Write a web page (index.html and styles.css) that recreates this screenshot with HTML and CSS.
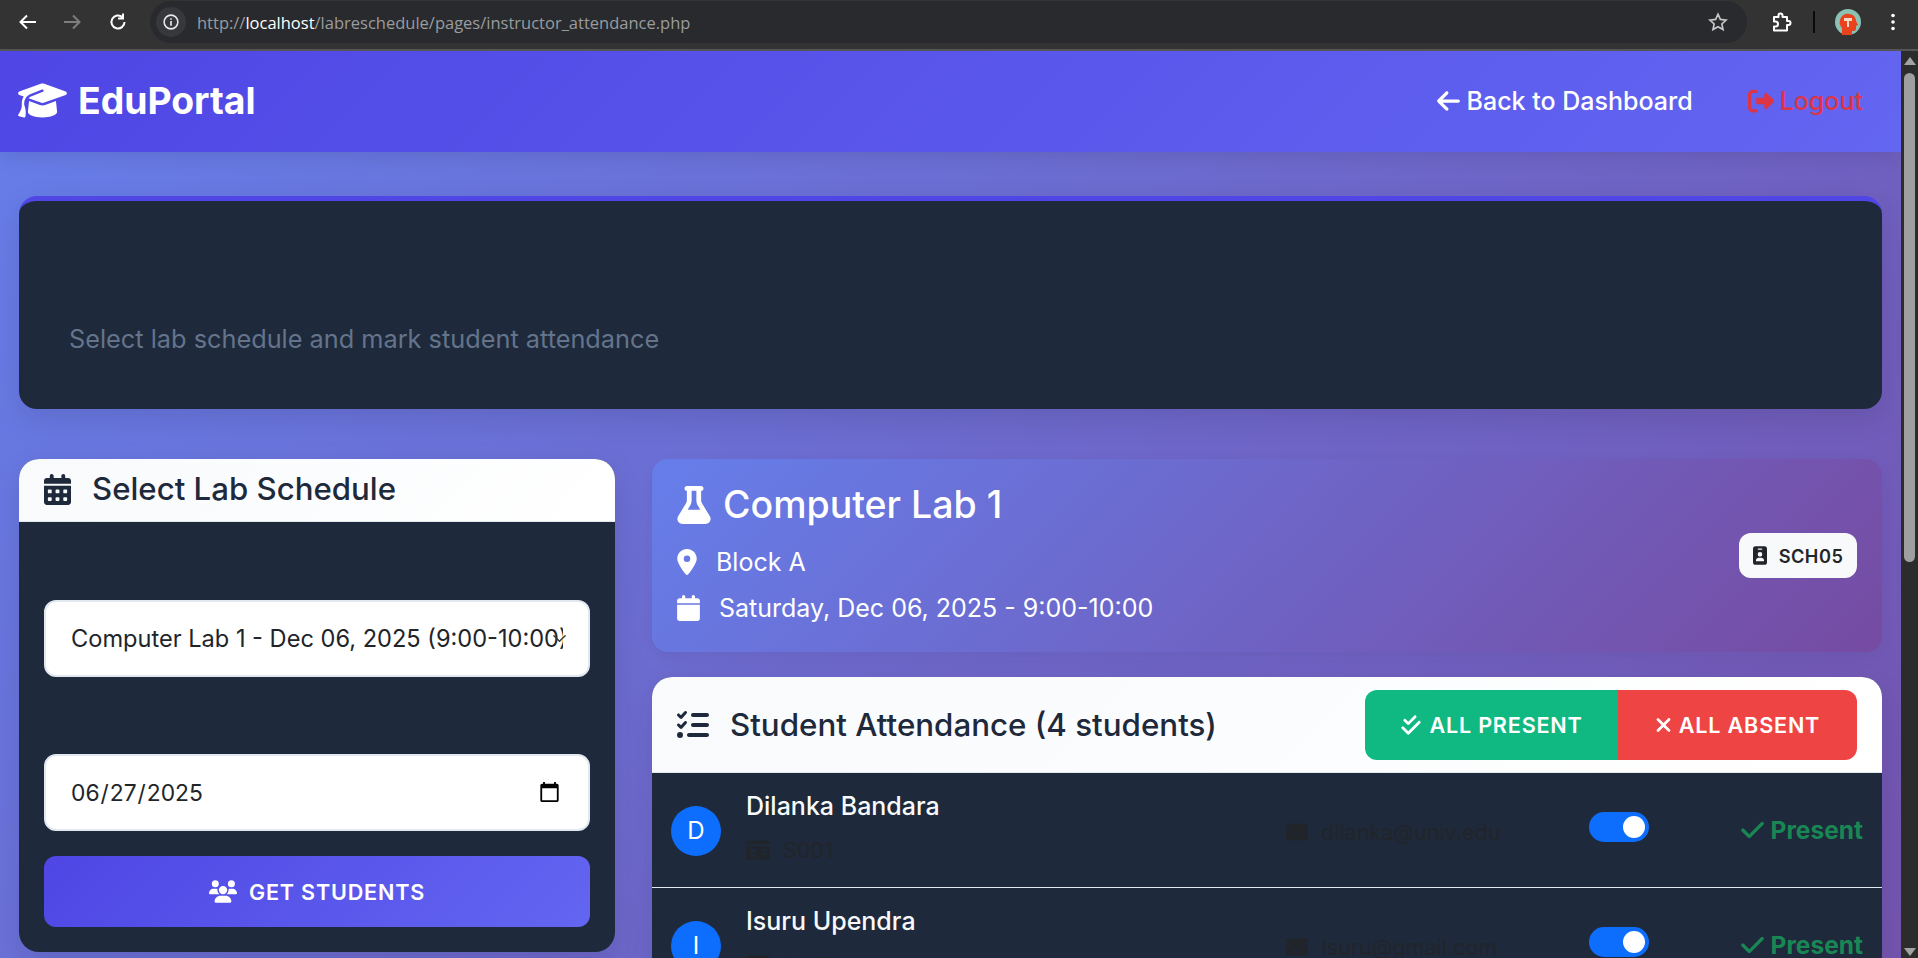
FILE: index.html
```html
<!DOCTYPE html>
<html lang="en">
<head>
<meta charset="UTF-8" />
<title>Instructor Attendance</title>
<link rel="stylesheet" href="styles.css">
</head>
<body>

<svg class="sprite" xmlns="http://www.w3.org/2000/svg">
  <symbol id="i-cap" viewBox="0 0 640 512"><path d="M320 32c-8.100 0-16.100 1.400-23.700 4.100L15.800 137.400C6.300 140.900 0 149.900 0 160s6.300 19.100 15.800 22.600l57.900 20.900C57.300 229.300 48 259.800 48 291.900v28.100c0 28.400-10.800 57.700-22.300 80.800c-6.500 13-13.900 25.800-22.500 37.600C0 442.700-.9 448.300 .9 453.400s6 8.900 11.200 10.200l64 16c4.200 1.100 8.700 .3 12.400-2s6.300-6.100 7.100-10.400c8.600-42.800 4.300-81.200-2.100-108.700C90.300 344.300 86 329.800 80 316.500V291.900c0-30.200 10.200-58.700 27.900-81.500c12.900-15.500 29.600-28 49.200-35.700l157-61.700c8.200-3.200 17.500 .8 20.700 9s-.8 17.500-9 20.700l-157 61.700c-12.400 4.900-23.300 12.400-32.200 21.600l159.600 57.600c7.600 2.700 15.600 4.100 23.700 4.100s16.100-1.400 23.700-4.100L624.200 182.600c9.500-3.400 15.800-12.500 15.800-22.600s-6.300-19.100-15.800-22.600L343.700 36.100C336.100 33.400 328.100 32 320 32zM128 408c0 35.300 86 72 192 72s192-36.700 192-72L496.700 262.600 354.500 314c-11.100 4-22.800 6-34.500 6s-23.500-2-34.500-6L143.300 262.600 128 408z"/></symbol>
  <symbol id="i-left" viewBox="0 0 448 512"><path d="M9.400 233.400c-12.500 12.500-12.500 32.800 0 45.300l160 160c12.500 12.500 32.800 12.500 45.300 0s12.500-32.800 0-45.300L109.200 288 416 288c17.700 0 32-14.300 32-32s-14.300-32-32-32l-306.700 0L214.600 118.600c12.500-12.500 12.500-32.800 0-45.300s-32.800-12.500-45.300 0l-160 160z"/></symbol>
  <symbol id="i-logout" viewBox="0 0 512 512"><path d="M377.900 105.900L500.700 228.700c7.200 7.200 11.300 17.100 11.300 27.300s-4.100 20.100-11.300 27.300L377.900 406.100c-6.400 6.400-15 9.900-24 9.900c-18.700 0-33.900-15.200-33.900-33.900l0-62.100-128 0c-17.700 0-32-14.300-32-32l0-64c0-17.700 14.300-32 32-32l128 0 0-62.100c0-18.700 15.200-33.900 33.900-33.900c9 0 17.600 3.600 24 9.900zM160 96L96 96c-17.700 0-32 14.300-32 32l0 256c0 17.700 14.300 32 32 32l64 0c17.700 0 32 14.300 32 32s-14.300 32-32 32l-64 0c-53 0-96-43-96-96L0 128C0 75 43 32 96 32l64 0c17.700 0 32 14.300 32 32s-14.300 32-32 32z"/></symbol>
  <symbol id="i-cal-alt" viewBox="0 0 448 512"><path d="M128 0c17.700 0 32 14.300 32 32V64H288V32c0-17.700 14.300-32 32-32s32 14.300 32 32V64h48c26.500 0 48 21.500 48 48v48H0V112C0 85.500 21.500 64 48 64H96V32c0-17.700 14.300-32 32-32zM0 192H448V464c0 26.500-21.500 48-48 48H48c-26.500 0-48-21.500-48-48V192zm64 80v32c0 8.800 7.200 16 16 16h32c8.800 0 16-7.200 16-16V272c0-8.800-7.200-16-16-16H80c-8.800 0-16 7.200-16 16zm128 0v32c0 8.800 7.200 16 16 16h32c8.800 0 16-7.200 16-16V272c0-8.800-7.200-16-16-16H208c-8.800 0-16 7.200-16 16zm144-16c-8.800 0-16 7.200-16 16v32c0 8.800 7.200 16 16 16h32c8.800 0 16-7.200 16-16V272c0-8.800-7.200-16-16-16H336zM64 400v32c0 8.800 7.200 16 16 16h32c8.800 0 16-7.200 16-16V400c0-8.800-7.200-16-16-16H80c-8.800 0-16 7.200-16 16zm144-16c-8.800 0-16 7.200-16 16v32c0 8.800 7.200 16 16 16h32c8.800 0 16-7.200 16-16V400c0-8.800-7.200-16-16-16H208zm112 16v32c0 8.800 7.200 16 16 16h32c8.800 0 16-7.200 16-16V400c0-8.800-7.200-16-16-16H336c-8.800 0-16 7.200-16 16z"/></symbol>
  <symbol id="i-cal" viewBox="0 0 448 512"><path d="M96 32V64H48C21.500 64 0 85.500 0 112v48H448V112c0-26.500-21.500-48-48-48H352V32c0-17.700-14.300-32-32-32s-32 14.300-32 32V64H160V32c0-17.700-14.300-32-32-32S96 14.300 96 32zM448 192H0V464c0 26.500 21.500 48 48 48H400c26.500 0 48-21.500 48-48V192z"/></symbol>
  <symbol id="i-marker" viewBox="0 0 384 512"><path d="M215.700 499.200C267 435 384 279.400 384 192C384 86 298 0 192 0S0 86 0 192c0 87.400 117 243 168.300 307.200c12.300 15.300 35.100 15.300 47.400 0zM192 128a64 64 0 1 1 0 128 64 64 0 1 1 0-128z"/></symbol>
  <symbol id="i-flask" viewBox="0 0 448 512"><path d="M288 0H160 128C110.300 0 96 14.300 96 32s14.300 32 32 32V196.800c0 11.800-3.300 23.500-9.500 33.500L10.300 406.200C3.600 417.200 0 429.700 0 442.600C0 480.900 31.100 512 69.400 512H378.600c38.300 0 69.400-31.100 69.400-69.400c0-12.800-3.600-25.400-10.300-36.400L329.500 230.400c-6.200-10.100-9.500-21.700-9.500-33.500V64c17.700 0 32-14.300 32-32s-14.300-32-32-32H288zM192 196.800V64h64V196.800c0 23.700 6.600 46.900 19 67.100L309.500 320h-171L173 263.900c12.400-20.200 19-43.400 19-67.100z"/></symbol>
  <symbol id="i-list" viewBox="0 0 512 512"><path d="M152.100 38.200c9.900 8.900 10.700 24 1.800 33.900l-72 80c-4.400 4.900-10.600 7.800-17.200 7.900s-12.900-2.400-17.600-7L7 113C-2.300 103.600-2.300 88.400 7 79s24.600-9.400 33.900 0l22.100 22.100 55.100-61.200c8.900-9.900 24-10.700 33.900-1.800zm0 160c9.900 8.900 10.700 24 1.800 33.900l-72 80c-4.400 4.900-10.600 7.800-17.200 7.900s-12.900-2.400-17.600-7L7 273c-9.400-9.400-9.400-24.600 0-33.900s24.600-9.400 33.900 0l22.100 22.100 55.100-61.200c8.900-9.900 24-10.700 33.900-1.800zM224 96c0-17.700 14.300-32 32-32H480c17.700 0 32 14.300 32 32s-14.300 32-32 32H256c-17.700 0-32-14.300-32-32zm0 160c0-17.700 14.300-32 32-32H480c17.700 0 32 14.300 32 32s-14.300 32-32 32H256c-17.700 0-32-14.300-32-32zM160 416c0-17.700 14.300-32 32-32H480c17.700 0 32 14.300 32 32s-14.300 32-32 32H192c-17.700 0-32-14.300-32-32zM48 368a48 48 0 1 1 0 96 48 48 0 1 1 0-96z"/></symbol>
  <symbol id="i-double" viewBox="0 0 512 512"><path d="M374.600 86.600c12.500-12.500 12.500-32.800 0-45.300s-32.800-12.500-45.300 0L192 178.700l-57.400-57.400c-12.500-12.500-32.800-12.500-45.300 0s-12.500 32.800 0 45.300l80 80c12.500 12.500 32.800 12.500 45.300 0l160-160zm96 128c12.500-12.500 12.500-32.800 0-45.300s-32.800-12.500-45.300 0L192 402.700 86.600 297.400c-12.500-12.500-32.800-12.500-45.300 0s-12.500 32.800 0 45.300l128 128c12.500 12.500 32.800 12.500 45.300 0l256-256z"/></symbol>
  <symbol id="i-times" viewBox="0 0 384 512"><path d="M342.600 150.600c12.500-12.500 12.500-32.800 0-45.300s-32.800-12.500-45.300 0L192 210.700 86.600 105.400c-12.500-12.500-32.800-12.500-45.300 0s-12.500 32.800 0 45.300L146.700 256 41.400 361.400c-12.500 12.500-12.500 32.800 0 45.300s32.800 12.500 45.300 0L192 301.300 297.400 406.600c12.500 12.500 32.800 12.500 45.300 0s12.500-32.800 0-45.300L237.300 256 342.600 150.600z"/></symbol>
  <symbol id="i-badge" viewBox="0 0 384 512"><path d="M64 0C28.700 0 0 28.700 0 64V448c0 35.300 28.700 64 64 64H320c35.300 0 64-28.700 64-64V64c0-35.300-28.700-64-64-64H64zm96 320h64c44.200 0 80 35.800 80 80c0 8.800-7.200 16-16 16H96c-8.800 0-16-7.200-16-16c0-44.200 35.800-80 80-80zm-32-96a64 64 0 1 1 128 0 64 64 0 1 1 -128 0zM144 64h96c8.800 0 16 7.200 16 16s-7.200 16-16 16H144c-8.800 0-16-7.200-16-16s7.200-16 16-16z"/></symbol>
  <symbol id="i-card" viewBox="0 0 576 512"><path d="M64 32C28.700 32 0 60.700 0 96v16H576V96c0-35.300-28.700-64-64-64H64zM576 160H0V416c0 35.300 28.700 64 64 64H512c35.300 0 64-28.700 64-64V160zM64 405.300c0-29.500 23.900-53.300 53.300-53.300h85.300c29.500 0 53.300 23.900 53.300 53.300c0 5.900-4.800 10.700-10.700 10.700H74.700c-5.900 0-10.700-4.800-10.700-10.700zM176 192a64 64 0 1 1 0 128 64 64 0 1 1 0-128zm176 16c0-8.800 7.200-16 16-16H496c8.800 0 16 7.200 16 16s-7.200 16-16 16H368c-8.800 0-16-7.200-16-16zm0 64c0-8.800 7.200-16 16-16H496c8.800 0 16 7.200 16 16s-7.200 16-16 16H368c-8.800 0-16-7.200-16-16zm0 64c0-8.800 7.200-16 16-16H496c8.800 0 16 7.200 16 16s-7.200 16-16 16H368c-8.800 0-16-7.200-16-16z"/></symbol>
  <symbol id="i-mail" viewBox="0 0 512 512"><path d="M48 64C21.500 64 0 85.500 0 112c0 15.100 7.100 29.300 19.200 38.400L236.800 313.600c11.400 8.500 27 8.500 38.400 0L492.800 150.400c12.100-9.100 19.200-23.300 19.200-38.400c0-26.500-21.500-48-48-48H48zM0 176V384c0 35.300 28.700 64 64 64H448c35.300 0 64-28.700 64-64V176L294.400 339.200c-22.800 17.100-54 17.100-76.800 0L0 176z"/></symbol>
  <symbol id="i-check" viewBox="0 0 448 512"><path d="M438.600 105.400c12.500 12.500 12.500 32.800 0 45.300l-256 256c-12.500 12.500-32.800 12.500-45.300 0l-128-128c-12.500-12.500-12.500-32.800 0-45.300s32.800-12.500 45.300 0L160 338.700 393.400 105.400c12.500-12.500 32.800-12.500 45.300 0z"/></symbol>
  <symbol id="i-users" viewBox="0 0 640 512"><path d="M144 0a80 80 0 1 1 0 160A80 80 0 1 1 144 0zM512 0a80 80 0 1 1 0 160A80 80 0 1 1 512 0zM0 298.700C0 239.800 47.800 192 106.700 192h42.700c15.900 0 31 3.500 44.600 9.700c-1.300 7.200-1.900 14.700-1.900 22.300c0 38.200 16.800 72.500 43.300 96c-.2 0-.4 0-.7 0H21.300C9.600 320 0 310.400 0 298.700zM405.300 320c-.2 0-.4 0-.7 0c26.600-23.500 43.300-57.800 43.300-96c0-7.600-.7-15-1.900-22.300c13.600-6.300 28.700-9.700 44.600-9.700h42.700C592.200 192 640 239.800 640 298.700c0 11.800-9.600 21.300-21.300 21.300H405.300zM224 224a96 96 0 1 1 192 0 96 96 0 1 1 -192 0zM128 485.300C128 411.700 187.700 352 261.300 352H378.700C452.300 352 512 411.700 512 485.300c0 14.700-11.900 26.700-26.700 26.700H154.700c-14.700 0-26.700-11.900-26.700-26.700z"/></symbol>
</svg>

<div class="chrome">
  <svg class="tool" viewBox="0 0 24 24"><path d="M20 12H5M11 5.500l-6.500 6.500 6.500 6.500" fill="none" stroke="#fff" stroke-width="2"/></svg>
  <svg class="tool" viewBox="0 0 24 24"><path d="M4 12h15M13 5.500l6.500 6.500-6.500 6.500" fill="none" stroke="#7d7d7d" stroke-width="2"/></svg>
  <svg class="tool reload" viewBox="0 0 24 24"><path d="M18.500 12a6.500 6.500 0 1 1-2-4.700M17 3.500v5h-5" fill="none" stroke="#fff" stroke-width="2"/></svg>
  <div class="omnibox">
    <span class="site-info">
      <svg viewBox="0 0 24 24"><circle cx="12" cy="12" r="7.500" fill="none" stroke="#e8e8e8" stroke-width="1.700"/><path d="M12 11v5M12 8v1.600" stroke="#e8e8e8" stroke-width="1.800"/></svg>
    </span>
    <span class="url">http://<b>localhost</b>/labreschedule/pages/instructor_attendance.php</span>
    <svg class="star" viewBox="0 0 24 24"><path d="M12 3.500l2.600 5.700 6.200.7-4.600 4.200 1.300 6.100-5.500-3.100-5.500 3.100 1.300-6.100-4.600-4.200 6.200-.7z" fill="none" stroke="#c4c7c5" stroke-width="1.800"/></svg>
  </div>
  <svg class="tool ext" viewBox="0 0 24 24"><path d="M5 7h4.500V5.500a2 2 0 0 1 4 0V7H18v4h1.500a2 2 0 0 1 0 4H18v5.500H5v-4h1.500a2.500 2.500 0 0 0 0-5H5z" fill="none" stroke="#fff" stroke-width="2" stroke-linejoin="round"/></svg>
  <span class="divider"></span>
  <svg class="avatar-pic" viewBox="0 0 26 26"><circle cx="13" cy="13" r="13" fill="#8cc2b5"/><path d="M7 26v-7c-2-2-3-5-2-8 1-4 5-7 9-6 4 0 7 3 7 7l2 4-2 1v3c0 2-2 2-4 2v4z" fill="#e8431c"/><path d="M9 9h8v3h-3v6h-2v-6H9z" fill="#f6d9c8"/></svg>
  <svg class="tool dots" viewBox="0 0 24 24"><circle cx="12" cy="5.500" r="1.800" fill="#fff"/><circle cx="12" cy="12" r="1.800" fill="#fff"/><circle cx="12" cy="18.500" r="1.800" fill="#fff"/></svg>
</div>

<div class="window">
  <div class="page">
    <nav class="navbar">
      <a class="brand"><svg class="ico cap"><use href="#i-cap"/></svg>EduPortal</a>
      <div class="nav-links">
        <a class="nav-link"><svg class="ico"><use href="#i-left"/></svg>Back to Dashboard</a>
        <a class="nav-link logout"><svg class="ico"><use href="#i-logout"/></svg>Logout</a>
      </div>
    </nav>

    <div class="content">
      <header class="hero">
        <p>Select lab schedule and mark student attendance</p>
      </header>

      <div class="columns">
        <section class="card picker">
          <h2 class="picker-head"><svg class="ico"><use href="#i-cal-alt"/></svg>Select Lab Schedule</h2>
          <form class="picker-body">
            <div class="select-wrap">
              <select class="field">
                <option>Computer Lab 1 - Dec 06, 2025 (9:00-10:00)</option>
              </select>
              <svg class="chevron" viewBox="0 0 16 16"><path d="M2 5l6 6 6-6" fill="none" stroke="#343a40" stroke-width="1.600" stroke-linecap="round" stroke-linejoin="round"/></svg>
            </div>
            <input class="field date" type="date" value="2025-06-27" />
            <button type="button" class="get-btn"><svg class="ico"><use href="#i-users"/></svg>Get Students</button>
          </form>
        </section>

        <div class="details">
          <section class="lab-info">
            <div class="lab-text">
              <h1><svg class="ico"><use href="#i-flask"/></svg>Computer Lab 1</h1>
              <p class="lab-place"><svg class="ico"><use href="#i-marker"/></svg>Block A</p>
              <p class="lab-date"><svg class="ico"><use href="#i-cal"/></svg>Saturday, Dec 06, 2025 - 9:00-10:00</p>
            </div>
            <span class="sch-badge"><svg class="ico"><use href="#i-badge"/></svg>SCH05</span>
          </section>

          <section class="card attendance">
            <div class="att-head">
              <h2><svg class="ico"><use href="#i-list"/></svg>Student Attendance (4 students)</h2>
              <div class="bulk">
                <button type="button" class="bulk-btn present"><svg class="ico"><use href="#i-double"/></svg>All Present</button>
                <button type="button" class="bulk-btn absent"><svg class="ico"><use href="#i-times"/></svg>All Absent</button>
              </div>
            </div>

            <div class="student">
              <span class="initial">D</span>
              <div class="who">
                <div class="name">Dilanka Bandara</div>
                <div class="sid"><svg class="ico"><use href="#i-card"/></svg>S001</div>
              </div>
              <div class="mail"><svg class="ico"><use href="#i-mail"/></svg>dilanka@univ.edu</div>
              <span class="switch"><span class="knob"></span></span>
              <div class="status"><svg class="ico"><use href="#i-check"/></svg>Present</div>
            </div>

            <div class="student">
              <span class="initial">I</span>
              <div class="who">
                <div class="name">Isuru Upendra</div>
                <div class="sid"><svg class="ico"><use href="#i-card"/></svg>S002</div>
              </div>
              <div class="mail"><svg class="ico"><use href="#i-mail"/></svg>Isuru@gmail.com</div>
              <span class="switch"><span class="knob"></span></span>
              <div class="status"><svg class="ico"><use href="#i-check"/></svg>Present</div>
            </div>
          </section>
        </div>
      </div>
    </div>
  </div>

  <div class="scrollbar">
    <span class="arrow up"></span>
    <span class="thumb"></span>
    <span class="track"></span>
    <span class="arrow down"></span>
  </div>
</div>

</body>
</html>
```

FILE: styles.css
```css
* {
  box-sizing: border-box;
}

html, body {
  margin: 0;
  height: 958px;
  overflow: hidden;
}

body {
  font-family: Inter, "Liberation Sans", sans-serif;
  background: #1e293b;
  color: #212529;
}

.sprite {
  display: none;
}

.ico {
  fill: currentColor;
  flex: none;
}

/* browser toolbar */
.chrome {
  height: 51px;
  background: #333;
  border-bottom: 2px solid #555;
  display: flex;
  align-items: center;
  padding: 0 0 5px 16px;
}

.tool {
  width: 24px;
  height: 24px;
  flex: none;
  margin-right: 20px;
}

.tool.reload {
  margin-left: 2px;
}

.omnibox {
  flex: 1;
  height: 42px;
  background: #282a2e;
  border-radius: 21px;
  display: flex;
  align-items: center;
  padding: 0 18px 0 6px;
}

.site-info {
  width: 30px;
  height: 30px;
  border-radius: 50%;
  background: #36383b;
  display: flex;
  align-items: center;
  justify-content: center;
  margin-right: 11px;
}

.site-info svg {
  width: 22px;
  height: 22px;
}

.url {
  flex: 1;
  font-family: "Open Sans", sans-serif;
  font-size: 16.5px;
  color: #9a9c9e;
  white-space: nowrap;
}

.url b {
  font-weight: 400;
  color: #fff;
}

.star {
  width: 22px;
  height: 22px;
}

.tool.ext {
  margin: 0 0 0 22px;
}

.divider {
  width: 2px;
  height: 22px;
  background: #0a0a0a;
  margin: 0 20px;
}

.avatar-pic {
  width: 26px;
  height: 26px;
  flex: none;
  margin-right: 20px;
}

.tool.dots {
  margin-right: 13px;
}

/* page + scrollbar */
.window {
  display: flex;
  height: 907px;
}

.page {
  flex: 1;
  min-width: 0;
  background: linear-gradient(135deg, #667eea 0%, #764ba2 100%);
  background-size: 100% 1500px;
  overflow: hidden;
}

.scrollbar {
  width: 17px;
  background: #2c2c2c;
  display: flex;
  flex-direction: column;
  align-items: center;
}

.arrow {
  width: 0;
  height: 0;
  border-left: 6px solid transparent;
  border-right: 6px solid transparent;
  margin: 6px 0 4px;
}

.arrow.up {
  border-bottom: 8px solid #a3a3a3;
}

.arrow.down {
  border-top: 8px solid #a3a3a3;
  margin: 4px 0 2px;
}

.thumb {
  width: 11px;
  height: 489px;
  margin-top: 4px;
  border-radius: 6px;
  background: #9f9f9f;
}

.track {
  flex: 1;
}

/* navbar */
.navbar {
  height: 101px;
  background: linear-gradient(135deg, #4f46e5, #6366f1);
  box-shadow: 0 4px 20px rgba(0, 0, 0, 0.1);
  display: flex;
  align-items: center;
  justify-content: space-between;
  padding: 0 38px 2px 18px;
  color: #fff;
}

.brand {
  display: flex;
  align-items: center;
  font-size: 37.3px;
  font-weight: 700;
  gap: 11px;
}

.brand .cap {
  width: 49px;
  height: 39px;
}

.nav-links {
  display: flex;
  align-items: center;
  gap: 55px;
}

.nav-link {
  display: flex;
  align-items: center;
  font-size: 25px;
  font-weight: 500;
  gap: 7px;
}

.nav-link .ico {
  width: 23px;
  height: 26px;
}

.nav-link.logout {
  color: #dc3545;
  gap: 6px;
}

.nav-link.logout .ico {
  width: 26px;
  height: 26px;
}

/* content */
.content {
  padding: 44px 19px 0;
}

.hero {
  height: 213px;
  background: #1e293b;
  border-top: 5px solid #4f46e5;
  border-radius: 18px;
  box-shadow: 0 10px 30px rgba(0, 0, 0, 0.1);
  padding: 121px 50px 0;
}

.hero p {
  margin: 0;
  font-size: 25.3px;
  line-height: 34px;
  color: #64748b;
}

.columns {
  display: flex;
  gap: 37px;
  margin-top: 50px;
  align-items: flex-start;
}

.card {
  background: #1e293b;
  border-radius: 20px;
  overflow: hidden;
  box-shadow: 0 10px 30px rgba(0, 0, 0, 0.1);
}

/* schedule picker */
.picker {
  width: 596px;
  flex: none;
  height: 493px;
}

.picker-head {
  margin: 0;
  height: 63px;
  background: linear-gradient(135deg, #f8fafc, #fff);
  border-bottom: 1px solid #e2e8f0;
  display: flex;
  align-items: center;
  gap: 21px;
  padding: 0 25px 2px;
  font-size: 31.2px;
  font-weight: 500;
  color: #1e293b;
}

.picker-head .ico {
  width: 27px;
  height: 31px;
}

.picker-body {
  padding: 78px 25px 0;
  display: flex;
  flex-direction: column;
}

.select-wrap {
  position: relative;
}

.field {
  display: block;
  width: 100%;
  height: 77px;
  background: #fff;
  border: 2px solid #e2e8f0;
  border-radius: 12px;
  padding: 0 25px 0 24px;
  font-family: Inter, sans-serif;
  font-size: 22.8px;
  color: #212529;
}

select.field {
  appearance: none;
  padding: 0 25px;
  font-size: 23.6px;
}

.chevron {
  position: absolute;
  right: 23px;
  top: 31px;
  width: 15px;
  height: 15px;
}

.date {
  margin-top: 77px;
}

.get-btn {
  margin-top: 25px;
  height: 71px;
  border: none;
  border-radius: 12px;
  background: linear-gradient(135deg, #4f46e5, #6366f1);
  color: #fff;
  font-family: Inter, sans-serif;
  font-size: 21.6px;
  font-weight: 600;
  letter-spacing: 0.8px;
  text-transform: uppercase;
  display: flex;
  align-items: center;
  justify-content: center;
  gap: 12px;
}

.get-btn .ico {
  width: 28px;
  height: 23px;
}

/* right column */
.details {
  flex: 1;
  min-width: 0;
}

.lab-info {
  height: 193px;
  border-radius: 16px;
  background: linear-gradient(135deg, #667eea 0%, #764ba2 100%);
  box-shadow: 0 5px 15px rgba(0, 0, 0, 0.05);
  color: #fff;
  display: flex;
  align-items: center;
  justify-content: space-between;
  padding: 0 25px;
}

.lab-text {
  padding-bottom: 6px;
}

.lab-info h1 {
  margin: 0;
  display: flex;
  align-items: center;
  gap: 12px;
  font-size: 37.5px;
  font-weight: 500;
  line-height: 48px;
}

.lab-info h1 .ico {
  width: 34px;
  height: 38px;
}

.lab-place,
.lab-date {
  margin: 0;
  display: flex;
  align-items: center;
  gap: 19px;
  font-size: 25px;
  line-height: 32px;
}

.lab-place {
  margin-top: 17px;
}

.lab-place .ico {
  width: 20px;
  height: 26px;
}

.lab-date {
  margin-top: 14px;
}

.lab-date .ico {
  width: 23px;
  height: 26px;
}

.sch-badge {
  width: 118px;
  height: 45px;
  background: #f8f9fa;
  border-radius: 12px;
  display: flex;
  align-items: center;
  justify-content: center;
  gap: 12px;
  font-size: 18.2px;
  font-weight: 600;
  letter-spacing: 0.5px;
  color: #212529;
}

.sch-badge .ico {
  width: 14px;
  height: 19px;
}

/* attendance list */
.attendance {
  margin-top: 25px;
}

.att-head {
  height: 96px;
  background: linear-gradient(135deg, #f8fafc, #fff);
  border-bottom: 1px solid #e2e8f0;
  display: flex;
  align-items: center;
  justify-content: space-between;
  padding: 0 25px;
}

.att-head h2 {
  margin: 0;
  display: flex;
  align-items: center;
  gap: 21px;
  font-size: 31.3px;
  font-weight: 500;
  color: #1e293b;
}

.att-head h2 .ico {
  width: 32px;
  height: 32px;
}

.bulk {
  display: flex;
  margin-top: 1px;
}

.bulk-btn {
  height: 70px;
  border: none;
  color: #fff;
  font-family: Inter, sans-serif;
  font-size: 21.6px;
  font-weight: 600;
  letter-spacing: 0.8px;
  text-transform: uppercase;
  display: flex;
  align-items: center;
  justify-content: center;
  gap: 7px;
}

.bulk-btn.present {
  width: 253px;
  background: #10b981;
  border-radius: 12px 0 0 12px;
}

.bulk-btn.absent {
  width: 239px;
  background: #ef4444;
  border-radius: 0 12px 12px 0;
}

.bulk-btn.present .ico {
  width: 22px;
  height: 22px;
}

.bulk-btn.absent .ico {
  width: 17px;
  height: 22px;
}

.student {
  height: 115px;
  border-bottom: 1px solid #e2e8f0;
  display: flex;
  align-items: center;
  padding: 0 19px;
}

.initial {
  width: 50px;
  height: 50px;
  border-radius: 50%;
  background: #0d6efd;
  color: #fff;
  font-size: 24px;
  display: flex;
  align-items: center;
  justify-content: center;
  flex: none;
  margin-top: 1px;
}

.who {
  margin-left: 25px;
  width: 540px;
  flex: none;
  margin-top: -6px;
}

.name {
  color: #f8f9fa;
  font-size: 25px;
  font-weight: 500;
  line-height: 30px;
}

.sid {
  display: flex;
  align-items: center;
  gap: 13px;
  margin-top: 16px;
  font-size: 21.5px;
  color: #212529;
}

.sid .ico {
  width: 24px;
  height: 22px;
}

.mail {
  display: flex;
  align-items: center;
  gap: 13px;
  width: 303px;
  flex: none;
  font-size: 21.5px;
  color: #212529;
  margin-top: 4px;
}

.mail .ico {
  width: 22px;
  height: 22px;
}

.switch {
  width: 60px;
  height: 30px;
  border-radius: 15px;
  background: #0d6efd;
  display: flex;
  align-items: center;
  justify-content: flex-end;
  padding-right: 4px;
  flex: none;
  margin-top: -6px;
}

.knob {
  width: 22px;
  height: 22px;
  border-radius: 50%;
  background: #fff;
}

.status {
  margin-left: auto;
  display: flex;
  align-items: center;
  gap: 7px;
  color: #198754;
  font-size: 24.5px;
  font-weight: 700;
}

.status .ico {
  width: 23px;
  height: 26px;
}
```
